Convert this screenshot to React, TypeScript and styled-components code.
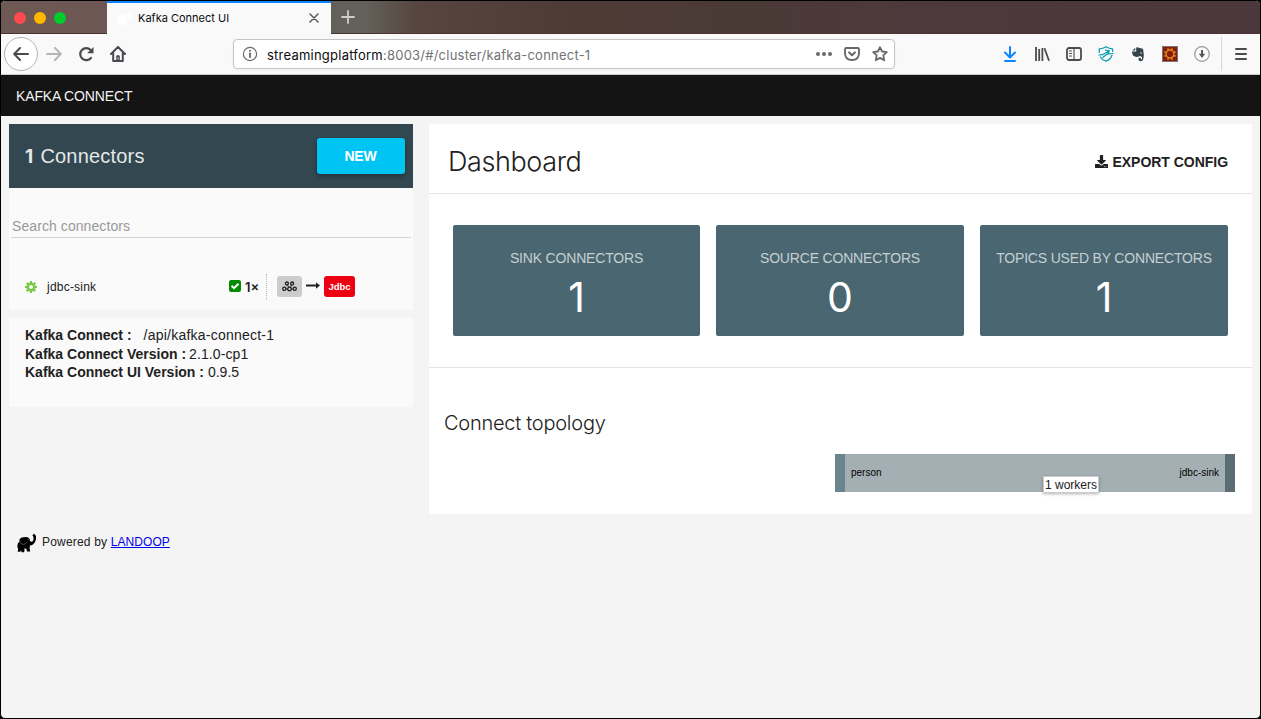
import React from "react";
import styled, { createGlobalStyle } from "styled-components";
import { FaDownload } from "react-icons/fa";

const Global = createGlobalStyle`
  * { box-sizing: border-box; }
  html, body { margin: 0; padding: 0; background: #000; }
  body { font-family: "Liberation Sans", Arial, sans-serif; color: #212121; }
  svg { display: block; flex: none; }
`;

const Window = styled.div`
  width: 1261px;
  height: 719px;
  border: 1px solid #000;
  background: #f4f4f4;
  overflow: hidden;
  display: flex;
  flex-direction: column;
  border-radius: 5px;
`;

const TitleBar = styled.div`
  height: 33px;
  flex: none;
  display: flex;
  background: linear-gradient(90deg, #6f5955 0%, #6c5753 8%, #62605a 26.5%, #62605a 29%, #57463f 33%, #4d3b35 45%, #4a3a36 60%, #4d393b 72%, #4c383c 100%);
  border-bottom: 1px solid #4d3234;
`;

const Lights = styled.div`
  width: 106px;
  display: flex;
  gap: 8px;
  padding: 11px 0 0 13px;
`;

const Light = styled.span<{ $color: string }>`
  width: 12px;
  height: 12px;
  border-radius: 50%;
  background: ${(p) => p.$color};
`;

const Tab = styled.div`
  width: 224px;
  height: 33px;
  display: flex;
  align-items: center;
  background: #f9f9fa;
  border-top: 2px solid #0a84ff;
  padding: 0 12px 1px 10px;
  color: #0c0c0d;
  svg:last-child { margin-left: auto; }
`;

const TabTitle = styled.span`
  margin-left: 6px;
  font: 11px Inter, sans-serif;
`;

const NewTab = styled.div`
  padding: 9px 0 0 10px;
`;

const Toolbar = styled.div`
  height: 41px;
  flex: none;
  display: flex;
  align-items: center;
  background: #f9f9fa;
  border-bottom: 1px solid #ccc;
`;

const NavIcons = styled.div`
  width: 232px;
  display: flex;
  align-items: center;
  padding-left: 3px;
`;

const BackButton = styled.div`
  width: 34px;
  height: 34px;
  border: 1px solid #b2b2b3;
  border-radius: 50%;
  background: #fff;
  display: flex;
  align-items: center;
  justify-content: center;
`;

const NavIcon = styled.div`
  width: 32px;
  display: flex;
  justify-content: center;
`;

const AddressBar = styled.div`
  width: 662px;
  height: 30px;
  border: 1px solid #c5c5c6;
  border-radius: 4px;
  background: #fff;
  box-shadow: 0 1px 3px rgba(0, 0, 0, 0.06);
  display: flex;
  align-items: center;
  padding: 0 6px 0 8px;
`;

const Url = styled.span`
  margin-left: 9px;
  padding-top: 1px;
  flex: 1;
  font: 13px Inter, sans-serif;
  letter-spacing: 0.23px;
  color: #737373;
  b { font-weight: 400; color: #0c0c0d; }
`;

const AddressActions = styled.div`
  display: flex;
  gap: 12px;
`;

const Extensions = styled.div`
  flex: 1;
  height: 100%;
  display: flex;
  align-items: center;
  justify-content: flex-end;
  gap: 16px;
  padding-right: 11px;
`;

const MenuArea = styled.div`
  height: 34px;
  border-left: 1px solid #d7d7db;
  padding-left: 11px;
  margin-left: -5px;
  display: flex;
  align-items: center;
`;

const AppBar = styled.header`
  height: 41px;
  flex: none;
  background: #141414;
  color: #f2f2f2;
  font-size: 14px;
  line-height: 42px;
  padding-left: 15px;
  letter-spacing: -0.15px;
`;

const Content = styled.main`
  display: flex;
  align-items: flex-start;
  padding: 8px 8px 0;
  gap: 16px;
`;

const Sidebar = styled.aside`
  width: 404px;
`;

const ListHeader = styled.div`
  height: 64px;
  background: #32474f;
  display: flex;
  align-items: center;
  justify-content: space-between;
  padding: 0 8px 0 16px;
  color: #e4e8e9;
`;

const ConnectorCount = styled.span`
  display: flex;
  align-items: baseline;
  gap: 7px;
  font-size: 20px;
  letter-spacing: 0.2px;
  b { font: 700 19px Inter, sans-serif; }
`;

const NewButton = styled.button`
  width: 88px;
  height: 36px;
  border: 0;
  border-radius: 3px;
  background: #00c4f4;
  color: #fff;
  font: bold 14px "Liberation Sans", sans-serif;
  letter-spacing: -0.15px;
  padding: 0 7px 0 6px;
  box-shadow: 0 2px 5px rgba(0, 0, 0, 0.3);
`;

const ListBody = styled.div`
  height: 122px;
  background: #fafafa;
  padding: 26px 2px 0;
`;

const Search = styled.div`
  height: 24px;
  border-bottom: 1px solid #d6d6d6;
  color: #999;
  font-size: 14px;
  letter-spacing: 0.08px;
  line-height: 24px;
  padding-left: 1px;
`;

const ConnectorRow = styled.div`
  display: flex;
  align-items: center;
  height: 26px;
  margin-top: 36px;
  padding-left: 14px;
`;

const ConnectorName = styled.span`
  width: 192px;
  padding-left: 10px;
  font-size: 12px;
  letter-spacing: 0.22px;
`;

const Tasks = styled.div`
  width: 38px;
  height: 26px;
  border-right: 1px dotted #bbb;
  display: flex;
  align-items: center;
  gap: 4px;
`;

const TaskCount = styled.span`
  font: 600 13px/16px Inter, sans-serif;
`;

const TopicBadge = styled.div`
  width: 25px;
  height: 21px;
  margin: 0 0 1px 10px;
  border-radius: 3px;
  background: #ccc;
  display: flex;
  align-items: center;
  justify-content: center;
`;

const ArrowIcon = styled.div`
  width: 22px;
  display: flex;
  justify-content: center;
  padding-bottom: 3px;
`;

const JdbcBadge = styled.span`
  width: 31px;
  height: 21px;
  margin-bottom: 1px;
  border-radius: 3px;
  background: #ed0012;
  color: #fff;
  font-size: 9.5px;
  font-weight: bold;
  line-height: 22px;
  text-align: center;
`;

const Info = styled.div`
  height: 89px;
  margin-top: 8px;
  padding: 8px 16px;
  background: #fafafa;
  font-size: 14px;
  line-height: 18.5px;
`;

const InfoLine = styled.div<{ $gap?: number; $spacing?: number }>`
  white-space: nowrap;
  letter-spacing: ${(p) => p.$spacing ?? 0}px;
  b { margin-right: ${(p) => p.$gap ?? 4}px; letter-spacing: 0; }
`;

const Dashboard = styled.section`
  width: 823px;
  height: 390px;
  border-radius: 2px;
  background: #fff;
`;

const DashHeader = styled.div`
  height: 70px;
  border-bottom: 1px solid #e5e5e5;
  display: flex;
  align-items: center;
  justify-content: space-between;
  padding: 6px 24px 0 19px;
`;

const Title = styled.h1`
  margin: 0;
  font: 300 27px Inter, sans-serif;
  letter-spacing: -0.4px;
`;

const Export = styled.div`
  display: flex;
  align-items: center;
  gap: 4px;
  font-size: 14px;
  font-weight: bold;
  letter-spacing: -0.03px;
`;

const Stats = styled.div`
  height: 174px;
  border-bottom: 1px solid #e5e5e5;
  display: grid;
  grid-template-columns: 247px 248px 248px;
  gap: 16px;
  padding: 31px 24px;
`;

const Card = styled.div`
  height: 111px;
  border-radius: 2px;
  background: #4a6670;
  text-align: center;
  padding-top: 24px;
  white-space: nowrap;
`;

const CardLabel = styled.div`
  font-size: 14px;
  line-height: 18px;
  letter-spacing: -0.18px;
  color: #c5d0d3;
`;

const CardValue = styled.div`
  margin-top: 6px;
  font: 400 41px/48px Inter, sans-serif;
  color: #fff;
`;

const Topology = styled.div`
  padding: 42px 17px 0 15px;
`;

const Subtitle = styled.h2`
  margin: 0;
  font: 300 20px/26px Inter, sans-serif;
  letter-spacing: -0.25px;
`;

const Flow = styled.div`
  position: relative;
  width: 400px;
  height: 38px;
  margin: 18px 0 0 auto;
  display: flex;
  justify-content: space-between;
  align-items: center;
  padding: 0 6px 2px;
  background: #a3afb3;
  border: solid;
  border-width: 0 10px;
  border-color: transparent #5d6d74 transparent #6a858f;
  color: #000;
  font-size: 10px;
`;

const Tooltip = styled.span`
  position: absolute;
  left: 198px;
  top: 22px;
  width: 56px;
  height: 17px;
  background: #fff;
  border: 1px solid #ccc;
  box-shadow: 0 1px 3px rgba(0, 0, 0, 0.3);
  color: #212121;
  font-size: 12px;
  line-height: 16px;
  padding-left: 1px;
  white-space: nowrap;
`;

const Footer = styled.footer`
  display: flex;
  padding: 19px 0 0 16px;
  font-size: 12px;
  letter-spacing: 0.19px;
  a { color: #0000ee; letter-spacing: 0.05px; }
`;

const FooterText = styled.span`
  margin-left: 5px;
  line-height: 18px;
`;

const Elephant = ({ size, color }: { size: number; color: string }) => (
  <svg width={size} height={size} viewBox="0 0 20 20" fill={color}>
    <path d="M2.5 6.2Q4.2 4 6.7 4.3Q9.5 3.6 11.5 4.7Q13 5.5 13 8L14.2 8.8Q16.6 8.6 16.5 5.5L16.3 3.4 15.2 2.5 16.1 1.9 16.8.6 18.2 2 19 2.7Q19.5 9.2 15.6 11.7Q14.3 12.6 13 12.3L12.6 15.2 13.2 18.6H10L9.4 15.8 7.2 15.6 7.6 17.3 7.1 19.2H4.6L4 17.1 3.4 18.8H.8L1.1 16 .3 13.5Q.2 10.1 2.5 8.6Z" />
    <path d="M2.8 7.8Q3.1 11.4 6.4 11.4Q9.4 11.3 10.2 8.4M10.7 6.6H12" fill="none" stroke={color === "#000" ? "#777" : "#fff"} strokeWidth=".6" />
  </svg>
);

const stroke = (color: string, width = 2) => ({
  fill: "none",
  stroke: color,
  strokeWidth: width,
  strokeLinecap: "round" as const,
  strokeLinejoin: "round" as const,
});

const teeth = [0, 45, 90, 135, 180, 225, 270, 315];

const stats = [
  { label: "SINK CONNECTORS", value: 1 },
  { label: "SOURCE CONNECTORS", value: 0 },
  { label: "TOPICS USED BY CONNECTORS", value: 1 },
];

export default function App() {
  return (
    <>
      <Global />
      <Window>
        <TitleBar>
          <Lights>
            <Light $color="#ff4a50" />
            <Light $color="#ffb700" />
            <Light $color="#00cb2d" />
          </Lights>
          <Tab>
            <Elephant size={15} color="#fff" />
            <TabTitle>Kafka Connect UI</TabTitle>
            <svg width="10" height="10" viewBox="0 0 10 10" {...stroke("#58585b", 1.5)}>
              <path d="M1 1 9 9M9 1 1 9" />
            </svg>
          </Tab>
          <NewTab>
            <svg width="14" height="14" viewBox="0 0 14 14" {...stroke("#cfcdcb", 1.8)}>
              <path d="M7 1V13M1 7H13" />
            </svg>
          </NewTab>
        </TitleBar>
        <Toolbar>
          <NavIcons>
            <BackButton>
              <svg width="16" height="16" viewBox="0 0 16 16" {...stroke("#4a4a4f")}>
                <path d="M15 8H1.5M7 2 1.2 8 7 14" />
              </svg>
            </BackButton>
            <NavIcon>
              <svg width="16" height="16" viewBox="0 0 16 16" {...stroke("#b5b5b7")}>
                <path d="M1 8H14.5M9 2 14.8 8 9 14" />
              </svg>
            </NavIcon>
            <NavIcon>
              <svg width="16" height="16" viewBox="0 0 16 16" {...stroke("#4a4a4f", 2.2)}>
                <path d="M13 11.8A6 6 0 1 1 12.6 4" />
                <path d="M15.5 1V7.3H9.2Z" fill="#4a4a4f" stroke="none" />
              </svg>
            </NavIcon>
            <NavIcon>
              <svg width="16" height="16" viewBox="0 0 16 16" {...stroke("#4a4a4f")}>
                <path d="M1 8 8 1 15 8M3.2 7V15H12.8V7" />
                <path d="M6.2 15V10.5Q6.2 9 8 9Q9.8 9 9.8 10.5V15Z" fill="#4a4a4f" stroke="none" />
                <path d="M8 12V13" stroke="#f9f9fa" strokeWidth="1" />
              </svg>
            </NavIcon>
          </NavIcons>
          <AddressBar>
            <svg width="16" height="16" viewBox="0 0 16 16" {...stroke("#6b6b6e", 1.2)}>
              <circle cx="8" cy="8" r="6.6" />
              <path d="M8 7.3V11.2" strokeWidth="1.8" />
              <circle cx="8" cy="4.7" r="1" fill="#6b6b6e" stroke="none" />
            </svg>
            <Url><b>streamingplatform</b>:8003/#/cluster/kafka-connect-1</Url>
            <AddressActions>
              <svg width="16" height="16" viewBox="0 0 16 16" fill="#68686b">
                <circle cx="2" cy="8" r="2" /><circle cx="8" cy="8" r="2" /><circle cx="14" cy="8" r="2" />
              </svg>
              <svg width="16" height="16" viewBox="0 0 16 16" {...stroke("#68686b", 1.9)}>
                <path d="M2.3 2H13.7Q15 2 15 3.3V7Q15 14 8 14Q1 14 1 7V3.3Q1 2 2.3 2ZM5 6.3 8 9.2 11 6.3" />
              </svg>
              <svg width="16" height="16" viewBox="0 0 16 16" {...stroke("#68686b", 1.8)}>
                <path d="M8 1.2 10 5.5 14.8 6.1 11.3 9.3 12.2 14.3 8 11.9 3.8 14.3 4.7 9.3 1.2 6.1 6 5.5Z" />
              </svg>
            </AddressActions>
          </AddressBar>
          <Extensions>
            <svg width="16" height="16" viewBox="0 0 16 16" {...stroke("#0a84ff")}>
              <path d="M8 1V11M3 6.5 8 11.5 13 6.5M3 15H13" />
            </svg>
            <svg width="16" height="16" viewBox="0 0 16 16" {...stroke("#4a4a4f")} strokeLinecap="butt">
              <path d="M2 1V15M5.2 3V15M8.4 2V15M10.5 2.3 15 14.7" strokeWidth="1.8" />
            </svg>
            <svg width="16" height="16" viewBox="0 0 16 16" {...stroke("#4a4a4f", 1.8)}>
              <rect x="1" y="2" width="14" height="12" rx="2" />
              <path d="M8 2V14M3.5 5H5.5M3.5 7.5H5.5M3.5 10H5.5" strokeWidth="1.1" />
            </svg>
            <svg width="16" height="16" viewBox="0 0 16 16" {...stroke("#079cae", 1.2)}>
              <path d="M1.3 6.5V2.8Q5 2.8 8 .8Q11 2.8 14.6 2.8V5.5M2.3 11Q4 14 8 15.3Q12.8 13.2 14 9.3" />
              <path d="M1 9 4.5 8.7 10.7 5.2M7.5 4.2 11.3 4.8 10.2 7.5M15 7.5 9 8.2 4.8 11.5" />
            </svg>
            <svg width="16" height="16" viewBox="0 0 16 16" fill="#34434a">
              <path d="M2.5 4.5 5.2 1.7V4.5ZM2 5.5H6.2V1.5Q8 .7 9.3 2L12 2.5Q13.3 2.5 13.3 4.5Q14.5 10 13 14Q12.3 15.5 9.5 15Q7.8 14 8.8 11.8H10.8V13.2H12Q12.5 10 9.5 10L8.3 10.8Q5 11.2 3.3 9.8Q2 8 2 5.5Z" />
              <circle cx="11" cy="7" r=".8" fill="#e8e8e8" />
            </svg>
            <svg width="16" height="16" viewBox="0 0 16 16">
              <rect x=".5" y=".5" width="15" height="15" fill="#8c1a09" stroke="#777" />
              <circle cx="8" cy="8" r="3.9" fill="none" stroke="#d58b18" strokeWidth="1.5" />
              {teeth.map((angle) => (
                <path key={angle} d="M8 3.7V1.9" stroke="#d58b18" strokeWidth="1.7" transform={`rotate(${angle + 22.5} 8 8)`} />
              ))}
            </svg>
            <svg width="16" height="16" viewBox="0 0 16 16" {...stroke("#999", 1.2)}>
              <circle cx="8" cy="8" r="7.3" />
              <path d="M8 4V8" stroke="#555" strokeWidth="2" strokeLinecap="butt" />
              <path d="M4.8 7.7H11.2L8 12Z" fill="#555" stroke="none" />
            </svg>
            <MenuArea>
              <svg width="16" height="16" viewBox="0 0 16 16" {...stroke("#4a4a4f")}>
                <path d="M3 3H13M3 8H13M3 13H13" />
              </svg>
            </MenuArea>
          </Extensions>
        </Toolbar>
        <AppBar>KAFKA CONNECT</AppBar>
        <Content>
          <Sidebar>
            <ListHeader>
              <ConnectorCount><b>1</b>Connectors</ConnectorCount>
              <NewButton>NEW</NewButton>
            </ListHeader>
            <ListBody>
              <Search>Search connectors</Search>
              <ConnectorRow>
                <svg width="12" height="12" viewBox="0 0 12 12">
                  <circle cx="6" cy="6" r="3.3" fill="none" stroke="#7ac943" strokeWidth="2.6" />
                  {teeth.map((angle) => (
                    <path key={angle} d="M6 2V0" stroke="#7ac943" strokeWidth="2.1" transform={`rotate(${angle} 6 6)`} />
                  ))}
                </svg>
                <ConnectorName>jdbc-sink</ConnectorName>
                <Tasks>
                  <svg width="12" height="14" viewBox="0 0 12 14">
                    <rect width="12" height="12" rx="2.2" fill="#008a00" />
                    <path d="M2.6 5.8 5 8.2 9.5 3.7" fill="none" stroke="#fff" strokeWidth="2" />
                  </svg>
                  <TaskCount>1×</TaskCount>
                </Tasks>
                <TopicBadge>
                  <svg width="15" height="11" viewBox="0 0 15 11" {...stroke("#222", 1.3)}>
                    <circle cx="4.9" cy="2.5" r="1.5" /><circle cx="10.1" cy="2.5" r="1.5" />
                    <circle cx="2.3" cy="7.8" r="1.6" /><circle cx="7.5" cy="8" r="1.8" /><circle cx="12.7" cy="7.8" r="1.6" />
                    <path d="M5.5 4 6.7 6.5M9.5 4 8.3 6.5M4 8H5.5M9.5 8H11" strokeWidth=".9" />
                  </svg>
                </TopicBadge>
                <ArrowIcon>
                  <svg width="14" height="7" viewBox="0 0 14 7">
                    <path d="M0 2.5H10V.2L14 3.5 10 6.8V4.5H0Z" fill="#222" />
                  </svg>
                </ArrowIcon>
                <JdbcBadge>Jdbc</JdbcBadge>
              </ConnectorRow>
            </ListBody>
            <Info>
              <InfoLine $gap={12} $spacing={0.23}><b>Kafka Connect :</b>/api/kafka-connect-1</InfoLine>
              <InfoLine $gap={3} $spacing={0.1}><b>Kafka Connect Version :</b>2.1.0-cp1</InfoLine>
              <InfoLine><b>Kafka Connect UI Version :</b>0.9.5</InfoLine>
            </Info>
          </Sidebar>
          <Dashboard>
            <DashHeader>
              <Title>Dashboard</Title>
              <Export><FaDownload size={13} />EXPORT CONFIG</Export>
            </DashHeader>
            <Stats>
              {stats.map((item) => (
                <Card key={item.label}>
                  <CardLabel>{item.label}</CardLabel>
                  <CardValue>{item.value}</CardValue>
                </Card>
              ))}
            </Stats>
            <Topology>
              <Subtitle>Connect topology</Subtitle>
              <Flow>
                <span>person</span>
                <span>jdbc-sink</span>
                <Tooltip>1 workers</Tooltip>
              </Flow>
            </Topology>
          </Dashboard>
        </Content>
        <Footer>
          <Elephant size={20} color="#000" />
          <FooterText>Powered by <a href="#landoop">LANDOOP</a></FooterText>
        </Footer>
      </Window>
    </>
  );
}
